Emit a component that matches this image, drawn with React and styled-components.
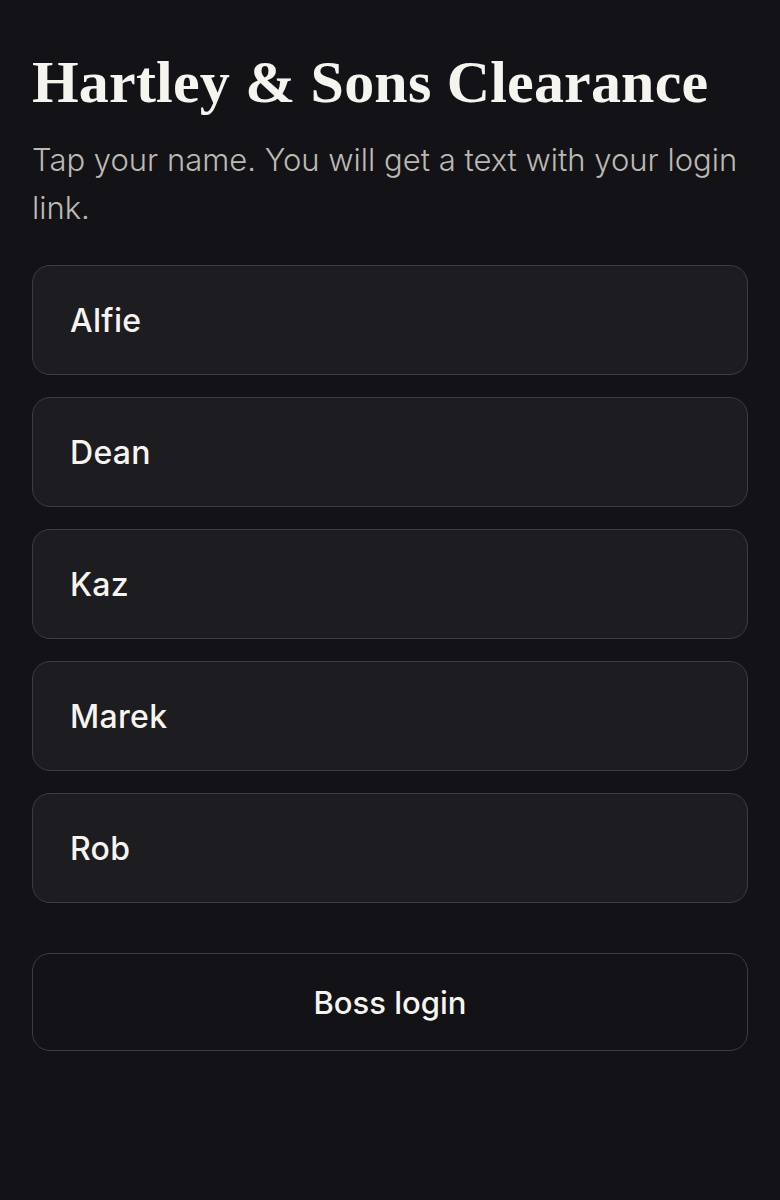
import React from 'react';
import styled, { createGlobalStyle } from 'styled-components';

const GlobalStyle = createGlobalStyle`
  html, body {
    margin: 0;
    padding: 0;
    background-color: #131217;
  }
  * {
    box-sizing: border-box;
  }
`

const crew = ['Alfie', 'Dean', 'Kaz', 'Marek', 'Rob'];

export default function App() {
  return (
    <Page>
      <GlobalStyle />
      <Title>Hartley &amp; Sons Clearance</Title>
      <Intro>Tap your name. You will get a text with your login link.</Intro>
      <NameList>
        {crew.map((name) => (
          <li key={name}>
            <NameBtn type='button'>{name}</NameBtn>
          </li>
        ))}
      </NameList>
      <BossBtn type='button'>Boss login</BossBtn>
    </Page>
  )
}

const Page = styled.main`
  display: flex;
  flex-direction: column;
  min-height: 1200px;
  padding: 46px 32px 32px;
  background-color: #131217;
  font-family: Inter, "Noto Sans", sans-serif;
`
const Title = styled.h1`
  margin: 0;
  font-family: "Liberation Serif", "DejaVu Serif", serif;
  font-size: 60px;
  font-weight: 700;
  line-height: 72px;
  letter-spacing: 0.2px;
  color: #f6f4ee;
`
const Intro = styled.p`
  margin: 18px 0 0;
  font-size: 31px;
  font-weight: 300;
  line-height: 48px;
  letter-spacing: 0;
  color: #bcb9b2;
`
const NameList = styled.ul`
  display: flex;
  flex-direction: column;
  gap: 22px;
  margin: 33px 0 0;
  padding: 0;
  list-style: none;
`
const NameBtn = styled.button`
  display: block;
  width: 100%;
  height: 110px;
  padding: 0 37px;
  border: 1px solid #3d3c43;
  border-radius: 18px;
  background-color: #1d1c21;
  font-family: inherit;
  font-size: 32px;
  font-weight: 500;
  letter-spacing: 0.3px;
  text-align: left;
  color: #f6f4ee;
  cursor: pointer;
`
const BossBtn = styled.button`
  display: block;
  width: 100%;
  height: 98px;
  margin-top: 50px;
  border: 1px solid #3d3c43;
  border-radius: 18px;
  background-color: transparent;
  font-family: inherit;
  font-size: 31px;
  font-weight: 500;
  color: #f6f4ee;
  cursor: pointer;
`
